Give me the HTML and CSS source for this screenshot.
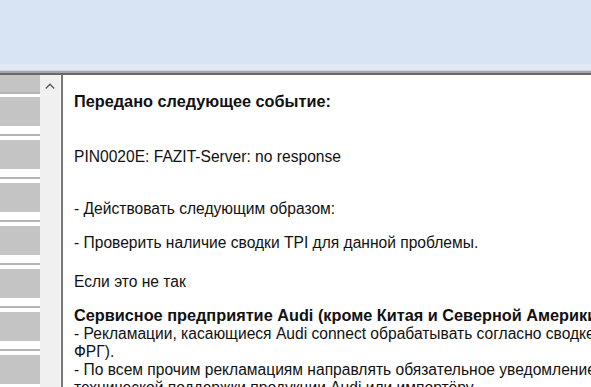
FILE: index.html
```html
<!DOCTYPE html>
<html lang="ru">
<head>
    <meta charset="UTF-8">
    <meta name="viewport" content="width=device-width, initial-scale=1.0">
    <title>Событие</title>
    <link rel="stylesheet" href="styles.css">
</head>
<body>
    <div class="ribbon"></div>
    <div class="ribbon-edge"></div>

    <div class="workspace">
        <div class="list">
            <div class="row row-first"><div class="row-face"></div></div>
            <div class="row"><div class="row-face"></div></div>
            <div class="row"><div class="row-face"></div></div>
            <div class="row"><div class="row-face"></div></div>
            <div class="row"><div class="row-face"></div></div>
            <div class="row"><div class="row-face"></div></div>
            <div class="row"><div class="row-face"></div></div>
            <div class="row"><div class="row-face"></div></div>
        </div>

        <div class="scrollbar">
            <svg class="arrow" width="10" height="6" viewBox="0 0 10 6">
                <polyline points="0.8,5.4 5,1.2 9.2,5.4" fill="none" stroke="#5a5a5a" stroke-width="1.4"/>
            </svg>
        </div>

        <div class="content">
            <p class="title">Передано следующее событие:</p>
            <p class="event">PIN0020E: FAZIT-Server: no response</p>
            <p class="step">- Действовать следующим образом:</p>
            <p class="step-2">- Проверить наличие сводки TPI для данной проблемы.</p>
            <p class="else">Если это не так</p>
            <p class="block">
                <b>Сервисное предприятие Audi (кроме Китая и Северной Америки)</b><br>
                - Рекламации, касающиеся Audi connect обрабатывать согласно сводке TPI 2034125 (только для<br>
                ФРГ).<br>
                - По всем прочим рекламациям направлять обязательное уведомление в службу<br>
                технической поддержки продукции Audi или импортёру.
            </p>
        </div>
    </div>
</body>
</html>
```

FILE: styles.css
```css
body {
    margin: 0;
    width: 591px;
    height: 387px;
    overflow: hidden;
    background: #fff;
    font-family: "Liberation Sans", Arial, sans-serif;
    color: #111;
}

.ribbon {
    height: 64px;
    background: #d8e4f3;
    border-bottom: 6px solid #e0e9f5;
}

.ribbon-edge {
    height: 2px;
    background: #a6a6a6;
    border-top: 1px solid #d3d6da;
    border-bottom: 2px solid #686868;
}

.workspace {
    display: flex;
    height: 312px;
}

/* left list of thumbnails */
.list {
    width: 40px;
    background: #fff;
    overflow: hidden;
}

.row {
    padding-bottom: 8px;
    border-bottom: 2px solid #b4b4b4;
    margin-bottom: 4px;
}

.row-face {
    height: 29px;
    background: #c4c4c4;
}

.row-first {
    padding-bottom: 0;
    margin-bottom: 3px;
}

.row-first .row-face {
    height: 17px;
}

.scrollbar {
    width: 21px;
    background: #f0f0f0;
    border-right: 1px solid #fafafa;
    display: flex;
    justify-content: center;
    padding-top: 8px;
    box-sizing: border-box;
}

.content {
    flex: 1;
    border-left: 2px solid #777;
    padding: 17px 0 0 11px;
    font-size: 15.6px;
    line-height: 18px;
    white-space: nowrap;
    overflow: hidden;
}

.content p {
    margin: 0;
}

.content b,
.title {
    font-weight: bold;
    font-size: 16.3px;
}

.event {
    margin-top: 38px !important;
}

.step {
    margin-top: 34px !important;
}

.step-2 {
    margin-top: 16px !important;
}

.else {
    margin-top: 21px !important;
}

.block {
    margin-top: 15px !important;
}
```
